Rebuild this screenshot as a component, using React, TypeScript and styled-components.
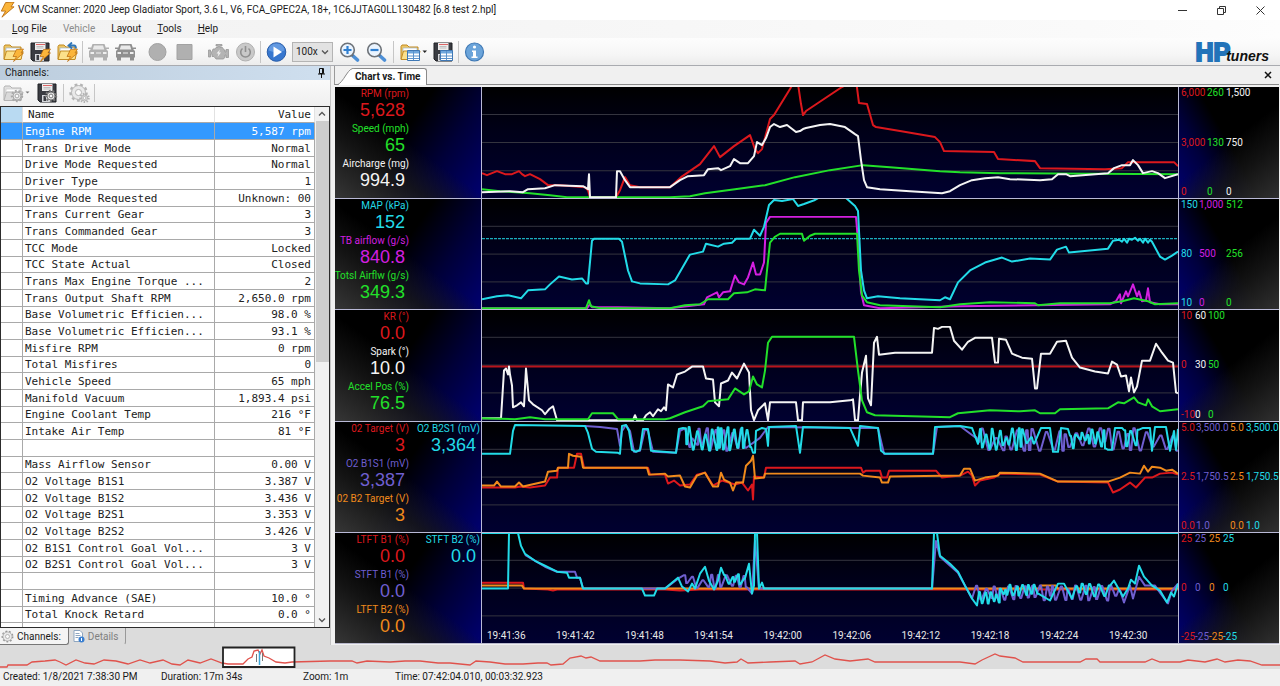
import React from "react";
import styled, { createGlobalStyle } from "styled-components";

const UI = `Roboto, "Open Sans", sans-serif`;
const MONO = `"DejaVu Sans Mono", "Liberation Mono", monospace`;
const GAUGE = `"Liberation Sans", Arial, sans-serif`;

const RED = "#dc181d";
const GREEN = "#22e02a";
const WHITE = "#f4f4f4";
const CYAN = "#22dbe8";
const MAGENTA = "#d31fe0";
const VIOLET = "#6f5fd0";
const ORANGE = "#f08a1c";

const GlobalStyle = createGlobalStyle`
  * { box-sizing: border-box; }
  body { margin: 0; background: #f0f0f0; color: #1a1a1a; font: 10px/16px ${UI}; }
  button { font: inherit; color: inherit; border: 0; background: none; padding: 0; }
`;

const Window = styled.div`
  display: flex;
  flex-direction: column;
  min-height: 100vh;
`;

/* ---------- title bar, menu and toolbar ---------- */

const TitleBar = styled.header`
  display: flex;
  align-items: center;
  height: 20px;
  background: #fff;
`;

const Title = styled.h1`
  flex: 1;
  margin: 0 0 0 2px;
  font: 400 10px/18px ${UI};
  white-space: nowrap;
`;

const CaptionButton = styled.button`
  width: 39px;
  height: 18px;
  display: grid;
  place-items: center;
`;

const MenuBar = styled.nav`
  display: flex;
  height: 18px;
  padding-left: 4px;
  background: linear-gradient(90deg, #f2f2f2, #fafafa 85%, #fdfdfd);
`;

const MenuItem = styled.button`
  padding: 0 8px;
  line-height: 18px;
  &:disabled { color: #8c8c8c; }
`;

const ToolBar = styled.div`
  display: flex;
  align-items: center;
  height: 28px;
  background: linear-gradient(#fdfdfd, #f6f6f6 60%, #ececec);
  border-bottom: 1px solid #a9abb0;
`;

const ToolButton = styled.button<{ $w?: number }>`
  width: ${(p) => p.$w ?? 27}px;
  height: 26px;
  display: flex;
  align-items: center;
  justify-content: center;
`;

const Separator = styled.span<{ $h?: number }>`
  width: 1px;
  height: ${(p) => p.$h ?? 22}px;
  margin: 0 2px 0 1px;
  background: #c6c6c6;
`;

const Gap = styled.span<{ $w: number }>`
  width: ${(p) => p.$w}px;
`;

const SpeedBox = styled.label`
  display: grid;
  align-items: center;
  margin: 0 3px 0 2px;
  > * { grid-area: 1 / 1; }
  > svg { justify-self: end; margin-right: 4px; pointer-events: none; }
`;

const SpeedSelect = styled.select`
  appearance: none;
  width: 41px;
  height: 20px;
  padding: 0 0 0 3px;
  border: 1px solid #b4b4b4;
  border-radius: 0;
  background: #e2e2e2;
  color: #222;
  font: 10px/18px ${UI};
`;

const Logo = styled.div`
  display: flex;
  align-items: flex-end;
  margin-left: auto;
  padding-right: 11px;
  font-family: "Liberation Sans", sans-serif;
  font-weight: 700;
  white-space: nowrap;
`;

const LogoMain = styled.span`
  color: #2273b9;
  font-size: 25px;
  line-height: 24px;
  -webkit-text-stroke: 2px #2273b9;
`;

const LogoSub = styled.span`
  position: relative;
  margin-left: -4px;
  color: #111;
  font-size: 14px;
  line-height: 15px;
  font-style: italic;
`;

/* ---------- channel panel ---------- */

const Body = styled.main`
  flex: 1;
  display: flex;
  gap: 3px;
  min-height: 0;
`;

const SidePanel = styled.section`
  display: flex;
  flex-direction: column;
  flex: 0 0 331px;
  border-right: 1px solid #c4c4c4;
`;

const PanelHead = styled.div`
  display: flex;
  align-items: center;
  justify-content: space-between;
  height: 14px;
  padding: 0 5px;
  background: linear-gradient(90deg, #bccddd, #cfdfef);
`;

const PanelTitle = styled.h2`
  margin: 0;
  font: 400 10px/14px ${UI};
`;

const PanelTools = styled.div`
  display: flex;
  align-items: center;
  height: 26px;
  background: linear-gradient(#fafafa, #efefef);
`;

const ListFrame = styled.div`
  flex: 1 1 0;
  min-height: 522px;
  display: flex;
  border: 1px solid #2c2c2c;
  background: #fff;
  overflow: hidden;
`;

const TableClip = styled.div`
  flex: 1;
  height: 520px;
  overflow: hidden;
`;

const ChannelTable = styled.table`
  width: 100%;
  table-layout: fixed;
  border-collapse: separate;
  border-spacing: 0;
  font: 11px/15px ${MONO};
  color: #222;
  th, td {
    padding: 0 3px 0 2px;
    border-right: 1px solid #a9a9a9;
    border-bottom: 1px solid #a9a9a9;
    font-weight: 400;
    text-align: left;
    white-space: nowrap;
    overflow: hidden;
  }
  th { height: 16px; border-right-color: #e2e2e2; padding-left: 5px; }
  th:first-child { background: #b9daf2; }
  td { height: 17px; }
  tbody tr:nth-child(3n) td { height: 16px; line-height: 14px; }
`;

const ValueCell = styled.td`
  && { text-align: right; }
`;

const ChannelRow = styled.tr<{ $selected?: boolean }>`
  ${(p) => p.$selected && `td { background: #3399ff; color: #fff; }`}
`;

const ScrollBar = styled.div`
  width: 14px;
  display: flex;
  flex-direction: column;
  background: #f1f1f1;
`;

const ScrollArrow = styled.button`
  height: 14px;
  display: grid;
  place-items: center;
`;

const ScrollTrack = styled.div`
  flex: 1;
`;

const ScrollThumb = styled.div`
  height: 49%;
  margin-left: 1px;
  background: #cdcdcd;
`;

const TabStrip = styled.div`
  display: flex;
  height: 17px;
  background: #dcdcdc;
`;

const SideTab = styled.button<{ $active?: boolean }>`
  display: flex;
  align-items: center;
  gap: 3px;
  padding: 0 7px 0 1px;
  color: ${(p) => (p.$active ? "#1a1a1a" : "#808080")};
  background: ${(p) => (p.$active ? "#f4f4f4" : "transparent")};
  border-right: 1px solid ${(p) => (p.$active ? "#777" : "#999")};
  border-bottom: 1px solid ${(p) => (p.$active ? "#777" : "transparent")};
  border-radius: 0 0 3px 0;
  line-height: 15px;
  &:not(:first-child) { padding-left: 4px; }
`;

/* ---------- chart panel ---------- */

const ChartPanel = styled.section`
  flex: 1;
  min-width: 0;
  display: flex;
  flex-direction: column;
  padding-right: 1px;
  background: #f0f0f0;
`;

const ChartTabs = styled.div`
  display: flex;
  align-items: flex-end;
  height: 19px;
  padding-left: 3px;
  border-bottom: 1px solid #8a8a8a;
  border-left: 1px solid #9a9a9a;
`;

const ChartTab = styled.button`
  display: flex;
  height: 17px;
  margin-bottom: -1px;
  font-weight: 700;
`;

const ChartTabText = styled.span`
  padding-right: 5px;
  background: #fff;
  border-top: 1px solid #8a8a8a;
  border-right: 1px solid #8a8a8a;
  border-radius: 0 3px 0 0;
  line-height: 15px;
`;

const CloseButton = styled.button`
  margin: 0 4px 0 auto;
  width: 14px;
  height: 18px;
  display: grid;
  place-items: center;
`;

const Strips = styled.div`
  flex: 1;
  display: grid;
  grid-template-rows: repeat(5, 1fr);
  min-height: 556px;
  margin: 2px 0 1px 1px;
  border-bottom: 1px solid #b9b9cc;
  background: #000;
`;

const Strip = styled.div`
  display: grid;
  grid-template-columns: 147px 1fr 101px;
  min-height: 0;
  overflow: hidden;
  font-family: ${GAUGE};
  & + & { border-top: 1px solid #b9b9d6; }
`;

const Gauges = styled.div`
  display: grid;
  grid-template-columns: 74px 71px;
  grid-template-rows: repeat(3, 35px);
  grid-auto-flow: column;
  background:
    linear-gradient(35deg, #363636, rgba(24, 24, 24, .8) 30%, rgba(0, 0, 0, 0) 50%),
    linear-gradient(305deg, #000070, #000038 30%, rgba(0, 0, 12, 0) 55%),
    #000;
  border-right: 1px solid #b9b9d6;
`;

const Gauge = styled.div<{ $color: string }>`
  display: flex;
  flex-direction: column;
  align-items: flex-end;
  color: ${(p) => p.$color};
  white-space: nowrap;
`;

const GaugeName = styled.span`
  font-family: ${UI};
  font-size: 10px;
  line-height: 13px;
`;

const GaugeValue = styled.span`
  padding-right: 4px;
  font-size: 18px;
  line-height: 21px;
`;

const Plot = styled.div`
  position: relative;
  min-width: 0;
  background: linear-gradient(#000, #000018 40%, #000030);
  > svg { display: block; width: 100%; height: 100%; position: absolute; inset: 0; }
`;

const TimeAxis = styled.div`
  position: absolute;
  inset: auto 0 0 5px;
  display: grid;
  grid-template-columns: repeat(10, 1fr);
  color: #e8e8e8;
  font: 10px/14px ${UI};
`;

const Scales = styled.div`
  display: flex;
  padding-left: 2px;
  border-left: 1px solid #b9b9d6;
  background:
    linear-gradient(322deg, #303030, rgba(24, 24, 24, .8) 28%, rgba(0, 0, 0, 0) 50%),
    linear-gradient(60deg, #000070, #00003c 28%, rgba(0, 0, 12, 0) 50%),
    #000;
`;

const Scale = styled.div<{ $w: number; $color: string }>`
  display: flex;
  flex-direction: column;
  justify-content: space-between;
  width: ${(p) => p.$w}px;
  color: ${(p) => p.$color};
  font: 10px/12px ${UI};
  white-space: nowrap;
`;

/* ---------- overview and status ---------- */

const Overview = styled.div`
  height: 24px;
  background: #dcdcdc;
  > svg { display: block; width: 100%; height: 24px; }
`;

const StatusBar = styled.footer`
  display: grid;
  grid-template-columns: 158px 142px 92px 1fr;
  height: 17px;
  padding-left: 3px;
  line-height: 16px;
`;

/* ---------- icons ---------- */

const Bolt = ({ x = 0, y = 0, s = 1 }: { x?: number; y?: number; s?: number }) => (
  <path
    transform={`translate(${x} ${y}) scale(${s})`}
    d="M4.500 0.500 11.500 0 9 4h2.500L1.500 12.500 4.500 7.500H1z"
    fill="#fbb53a"
    stroke="#b8690c"
    strokeWidth=".7"
    strokeLinejoin="round"
  />
);

const Folder = ({ grey = false }: { grey?: boolean }) => (
  <g stroke={grey ? "#b3b3b3" : "#c28b23"} strokeWidth="1" strokeLinejoin="round">
    <path d="M1 17V4.500L2 3h5l2 2h9v12z" fill={grey ? "#e0e0e0" : "#ecc565"} />
    <path d="M3 6h14v4H3z" fill="#fff" stroke={grey ? "#c8c8c8" : "#9fb8d4"} strokeWidth=".7" />
    <path d="M1 17.500 3.500 9H20l-2 8.500z" fill={grey ? "#dadada" : "#fbe08b"} />
  </g>
);

const Disk = () => (
  <g>
    <path d="M1 1h18v18H3l-2-2z" fill="#3a3c42" stroke="#1f2024" />
    <path d="M5 1h10.500v7H5z" fill="#eee" />
    <path d="M6 2h9v1H6z" fill="#d66" />
    <path d="M6.500 4.500h7M6.500 6h7" stroke="#aaa" strokeWidth=".7" />
    <path d="M5 12h9v7H5z" fill="#d6d8dc" />
    <path d="M6.500 13h2.500v5H6.500z" fill="#3a3c42" />
  </g>
);

const Gear = ({ cx, cy, r, color }: { cx: number; cy: number; r: number; color: string }) => (
  <g>
    <circle cx={cx} cy={cy} r={r} fill="none" stroke={color} strokeWidth="2.400" strokeDasharray={`${(r * Math.PI) / 9} ${(r * Math.PI) / 9}`} />
    <circle cx={cx} cy={cy} r={r - 1} fill="#e9e9e9" stroke={color} strokeWidth="1" />
    <circle cx={cx} cy={cy} r={r / 2.600} fill="#fafafa" stroke={color} strokeWidth="1" />
  </g>
);

const Sheet = ({ x, y }: { x: number; y: number }) => (
  <g transform={`translate(${x} ${y})`}>
    <path d="M.5.5h12v10H.5z" fill="#fff" stroke="#3f78b5" />
    <path d="M1 1h11v2.500H1z" fill="#6ea6dc" />
    <path d="M1 6h11M1 8.500h11M6.500 1v9" stroke="#5b92cb" strokeWidth="1" />
  </g>
);

const Icon = ({ children, w = 21, h = 20, box }: { children: React.ReactNode; w?: number; h?: number; box?: string }) => (
  <svg width={w} height={h} viewBox={box ?? `0 0 ${w} ${h}`} aria-hidden="true">
    {children}
  </svg>
);

const Car = ({ dark = false }: { dark?: boolean }) => {
  const c = dark ? "#8f8f8f" : "#b0b0b0";
  return (
    <Icon>
      <path d="M4.500 2h12L18.500 7.500 20 9v6.500H1V9l1.500-1.500z" fill={c} />
      <path d="M6 3.500h9l1.300 4H4.700z" fill="#e9e9e9" />
      <path d="M0 5.500h3v1.500H0zM18 5.500h3v1.500h-3z" fill={c} />
      <path d="M2 15h4v3.500H2zM15 15h4v3.500h-4z" fill={c} />
      <path d="M2.500 10H6v2H2.500zM15 10h3.500v2H15zM8 10.500h5v1H8z" fill="#efefef" />
    </Icon>
  );
};

const Magnifier = ({ plus = false }: { plus?: boolean }) => (
  <Icon>
    <path d="M13 13l5.500 5" stroke="#4d8fd6" strokeWidth="3.600" strokeLinecap="round" />
    <path d="M12 12l2 2" stroke="#666" strokeWidth="2" />
    <circle cx="8.500" cy="8" r="6.800" fill="#eaf4ff" stroke="#6d7278" strokeWidth="1.600" />
    <path d={plus ? "M4.500 8h8M8.500 4v8" : "M4.500 8h8"} stroke="#2f7fd0" strokeWidth="2.200" />
  </Icon>
);

const Chevron = ({ up = false }: { up?: boolean }) => (
  <svg width="8" height="6" viewBox="0 0 8 6" aria-hidden="true">
    <path d={up ? "M1 4.500 4 1.500 7 4.500" : "M1 1.500 4 4.500 7 1.500"} fill="none" stroke="#555" strokeWidth="1.300" />
  </svg>
);

/* ---------- data ---------- */

const channels: [string, string][] = [
  ["Engine RPM", "5,587 rpm"],
  ["Trans Drive Mode", "Normal"],
  ["Drive Mode Requested", "Normal"],
  ["Driver Type", "1"],
  ["Drive Mode Requested", "Unknown: 00"],
  ["Trans Current Gear", "3"],
  ["Trans Commanded Gear", "3"],
  ["TCC Mode", "Locked"],
  ["TCC State Actual", "Closed"],
  ["Trans Max Engine Torque ...", "2"],
  ["Trans Output Shaft RPM", "2,650.0 rpm"],
  ["Base Volumetric Efficien...", "98.0 %"],
  ["Base Volumetric Efficien...", "93.1 %"],
  ["Misfire RPM", "0 rpm"],
  ["Total Misfires", "0"],
  ["Vehicle Speed", "65 mph"],
  ["Manifold Vacuum", "1,893.4 psi"],
  ["Engine Coolant Temp", "216 °F"],
  ["Intake Air Temp", "81 °F"],
  ["", ""],
  ["Mass Airflow Sensor", "0.00 V"],
  ["O2 Voltage B1S1", "3.387 V"],
  ["O2 Voltage B1S2", "3.436 V"],
  ["O2 Voltage B2S1", "3.353 V"],
  ["O2 Voltage B2S2", "3.426 V"],
  ["O2 B1S1 Control Goal Vol...", "3 V"],
  ["O2 B2S1 Control Goal Vol...", "3 V"],
  ["", ""],
  ["Timing Advance (SAE)", "10.0 °"],
  ["Total Knock Retard", "0.0 °"],
  ["", ""],
];

type Reading = { name: string; value: string; color: string };
type Axis = { w: number; color: string; ticks: [string, string, string] };
type Trace = { color: string; points: string; width?: number; dash?: string };
type StripData = { top: number; readings: Reading[]; axes: Axis[]; traces: Trace[] };

/* Fast switching sensor signal between two levels, reproducible from its seed. */
const swing = (from: number, to: number, high: number, low: number, step: number, seed: number) => {
  let s = seed * 7919;
  const rnd = () => ((s = (s * 16807) % 2147483647) / 2147483647);
  const out: string[] = [];
  let up = true;
  for (let x = from; x < to; x += step * (0.4 + rnd() * 1.2)) {
    const depth = (low - high) * 0.6 * rnd() * rnd();
    const y = up ? high + depth : low - depth;
    out.push(`${x.toFixed(1)},${y.toFixed(1)}`, `${(x + step * 0.3).toFixed(1)},${y.toFixed(1)}`);
    up = !up;
  }
  return out.join(" ");
};

const strips: StripData[] = [
  {
    top: 87,
    readings: [
      { name: "RPM (rpm)", value: "5,628", color: RED },
      { name: "Speed (mph)", value: "65", color: GREEN },
      { name: "Aircharge (mg)", value: "994.9", color: WHITE },
    ],
    axes: [
      { w: 26, color: RED, ticks: ["6,000", "3,000", "0"] },
      { w: 19, color: GREEN, ticks: ["260", "130", "0"] },
      { w: 40, color: WHITE, ticks: ["1,500", "750", "0"] },
    ],
    traces: [
      { color: RED, points: "482,173 487,175 497,171 505,174 512,174 519,171 522,174 525,176 530,174 540,179 548,185 560,185 585,187 588,190 590,197 616,197 620,190 625,177 630,185 640,187 670,187 681,177 700,164 714,146 720,157 734,146 750,135 755,149 758,153 762,149 766,134 770,119 774,115 790,89 795,80 798,84 801,104 803,115 806,111 842,87 856,80 859,103 867,104 873,125 876,127 900,131 935,137 940,142 944,151 994,152 998,159 1035,161 1040,168 1105,169 1122,168 1128,162 1174,162 1178,166" },
      { color: GREEN, points: "482,189 500,191 530,193 550,195 567,197 670,197 690,196 705,193 735,189 765,185 795,177 830,170 863,165 890,167 940,171 960,172 1000,173 1178,174" },
      { color: WHITE, points: "482,192 510,191 523,192 528,189 545,188 555,185 583,186 588,189 589,174 590,197 616,197 617,171 620,171 625,180 630,187 670,187 680,180 688,176 704,175 708,169 718,168 721,170 730,166 734,159 740,163 748,163 754,156 757,142 762,145 766,138 770,127 774,124 780,127 787,125 796,132 800,131 803,129 806,128 820,125 830,124 845,127 855,134 858,136 861,160 864,180 867,187 880,189 910,191 942,193 950,191 960,185 972,180 985,178 998,177 1010,179 1040,180 1052,179 1058,174 1066,174 1070,176 1108,173 1114,168 1122,165 1130,165 1133,160 1138,165 1143,173 1152,171 1158,173 1165,178 1178,174" },
    ],
  },
  {
    top: 198,
    readings: [
      { name: "MAP (kPa)", value: "152", color: CYAN },
      { name: "TB airflow (g/s)", value: "840.8", color: MAGENTA },
      { name: "Totsl Airflw (g/s)", value: "349.3", color: GREEN },
    ],
    axes: [
      { w: 18, color: CYAN, ticks: ["150", "80", "10"] },
      { w: 27, color: MAGENTA, ticks: ["1,000", "500", "0"] },
      { w: 40, color: GREEN, ticks: ["512", "256", "0"] },
    ],
    traces: [
      { color: CYAN, points: "482,238 1178,238", width: 1, dash: "3 1" },
      { color: MAGENTA, points: "482,308 587,308 590,304 592,307 618,307 670,308 704,304 707,297 717,292 719,297 723,292 730,291 735,275 739,282 744,284 748,277 753,262 756,274 760,274 764,262 766,222 770,216 856,216 858,240 861,292 864,305 880,308 960,306 1110,304 1116,301 1120,294 1121,303 1126,291 1128,296 1133,284 1137,296 1139,291 1142,301 1146,300 1148,288 1150,302 1160,304 1178,304" },
      { color: CYAN, points: "482,299 497,296 508,295 521,298 528,290 545,289 550,284 559,276 572,279 582,278 586,283 588,283 592,240 594,238 619,238 622,241 628,270 632,281 640,283 668,284 675,280 690,254 703,251 706,243 718,246 724,243 732,242 736,238 750,238 754,229 760,235 764,226 769,204 774,199 782,200 793,198 798,205 804,203 815,199 820,196 846,197 855,205 858,210 861,270 864,290 867,298 878,296 900,298 940,300 945,297 950,299 958,282 970,270 985,262 1002,257 1012,261 1030,258 1050,259 1057,249 1066,246 1069,252 1108,248 1113,240 1119,239 1122,241 1124,238 1127,242 1129,238 1132,239 1135,237 1138,240 1140,238 1143,242 1145,238 1148,242 1150,239 1152,241 1160,256 1165,259 1172,255 1178,251" },
      { color: GREEN, points: "482,308 586,308 589,300 591,306 600,308 670,308 685,305 700,304 708,299 720,299 728,299 734,293 747,292 755,289 765,290 767,270 770,242 775,236 780,233 802,233 804,240 810,235 815,233 857,233 859,270 862,295 867,302 880,305 940,307 960,304 990,302 1035,303 1038,305 1060,303 1110,303 1122,301 1134,298 1148,301 1155,304 1178,303" },
    ],
  },
  {
    top: 309,
    readings: [
      { name: "KR (°)", value: "0.0", color: RED },
      { name: "Spark (°)", value: "10.0", color: WHITE },
      { name: "Accel Pos (%)", value: "76.5", color: GREEN },
    ],
    axes: [
      { w: 14, color: RED, ticks: ["10", "0", "-10"] },
      { w: 13, color: WHITE, ticks: ["60", "30", "0"] },
      { w: 40, color: GREEN, ticks: ["100", "50", "0"] },
    ],
    traces: [
      { color: "#b8141c", points: "482,366 1178,366" },
      { color: WHITE, points: "482,418 501,418 504,370 506,368 508,374 509,366 510,374 512,385 513,407 517,405 521,402 524,406 526,368 529,400 533,404 542,410 545,414 549,409 553,406 557,420 633,420 635,415 637,420 643,420 646,415 650,412 653,416 658,409 661,411 664,407 666,410 668,384 673,387 677,374 685,371 692,366 703,366 706,378 713,379 715,402 719,406 721,383 728,380 732,372 737,378 744,363 749,372 751,410 754,420 758,410 765,403 768,420 770,402 796,402 798,420 802,420 803,402 830,402 850,400 853,399 855,420 858,420 860,395 862,372 866,355 868,398 871,405 874,342 877,336 879,354 895,352 932,352 934,327 938,328 942,326 950,326 954,340 962,349 968,341 975,337 992,337 995,362 998,362 999,338 1006,339 1012,353 1022,357 1032,358 1035,388 1037,388 1041,353 1050,353 1057,341 1066,340 1072,357 1080,367 1095,371 1108,373 1112,361 1117,364 1121,376 1126,375 1129,391 1131,377 1134,392 1137,386 1142,360 1150,360 1156,343 1162,352 1168,360 1173,362 1176,392 1178,393" },
      { color: GREEN, points: "482,418 515,419 530,417 545,419 588,419 592,413 613,413 618,419 665,419 670,418 685,412 703,406 708,401 728,399 735,388 744,394 749,391 753,376 757,384 762,387 765,370 768,342 772,336 854,336 858,370 862,400 867,412 875,415 950,417 958,413 990,410 1020,411 1035,410 1040,413 1055,413 1060,409 1108,408 1118,402 1124,403 1134,397 1138,402 1146,405 1148,399 1152,406 1160,411 1178,409" },
    ],
  },
  {
    top: 421,
    readings: [
      { name: "02 Target (V)", value: "3", color: RED },
      { name: "O2 B1S1 (mV)", value: "3,387", color: VIOLET },
      { name: "02 B2 Target (V)", value: "3", color: ORANGE },
      { name: "O2 B2S1 (mV)", value: "3,364", color: CYAN },
    ],
    axes: [
      { w: 15, color: RED, ticks: ["5.0", "2.5", "0.0"] },
      { w: 34, color: VIOLET, ticks: ["3,500.0", "1,750.5", "1.0"] },
      { w: 16, color: ORANGE, ticks: ["5.0", "2.5", "0.0"] },
      { w: 30, color: CYAN, ticks: ["3,500.0", "1,750.5", "1.0"] },
    ],
    traces: [
      { color: RED, points: "482,487 515,487 520,486 530,487 545,485 550,477 557,477 558,467 574,467 577,453 581,453 584,467 648,467 650,474 665,474 668,483 674,480 680,485 690,484 697,474 705,472 713,485 722,480 735,484 742,482 748,490 752,484 753,499 754,476 764,477 766,467 861,467 863,472 866,470 880,470 882,477 887,477 889,470 936,470 942,477 960,475 968,471 972,475 975,485 980,480 994,477 1000,473 1040,474 1058,481 1108,482 1113,492 1120,489 1130,482 1136,487 1145,477 1152,477 1160,473 1172,472 1178,474" },
      { color: ORANGE, points: "482,485 494,485 497,481 501,486 515,486 519,482 523,486 545,481 548,471 557,470 558,467 568,467 569,453 573,455 581,456 583,467 647,467 649,474 665,473 668,476 680,475 685,486 690,487 697,475 705,472 713,486 718,486 721,472 724,479 730,482 733,490 736,482 743,482 746,465 751,460 753,455 755,478 764,477 765,473 860,473 863,475 880,477 882,482 888,482 890,476 960,475 964,468 970,468 975,480 985,477 998,475 1000,472 1040,473 1058,481 1108,481 1120,477 1130,472 1140,473 1144,465 1148,471 1152,466 1160,467 1166,470 1172,469 1178,473" },
      { color: VIOLET, points: `585,425 600,426 617,428 620,445 622,430 626,424 630,430 634,451 640,450 645,428 648,430 653,451 676,452 680,430 ${swing(684, 750, 427, 450, 4, 31)} 760,437 768,426 856,427 878,427 884,453 933,453 937,426 960,425 ${swing(975, 1178, 427, 450, 5, 77)}` },
      { color: CYAN, points: `482,453 510,453 513,430 515,424 585,425 588,432 592,448 596,451 618,452 620,453 622,425 626,424 629,430 632,449 636,451 640,449 643,428 648,428 651,450 676,452 679,428 683,427 ${swing(685, 752, 426, 450, 3, 11)} 753,452 755,452 756,430 762,427 766,428 768,445 769,426 796,425 800,452 803,426 850,427 858,445 860,425 878,427 881,450 885,453 933,453 935,426 960,425 972,427 978,443 ${swing(980, 1038, 427, 450, 3, 5)} 1041,427 1050,427 1053,451 1058,451 1061,427 1068,428 ${swing(1070, 1106, 428, 448, 3, 43)} 1108,449 1112,449 1115,427 1122,427 ${swing(1124, 1140, 428, 450, 4, 8)} 1143,427 1150,427 1152,450 1155,426 1166,426 1170,450 1174,430 1176,449 1178,428` },
    ],
  },
  {
    top: 532,
    readings: [
      { name: "LTFT B1 (%)", value: "0.0", color: RED },
      { name: "STFT B1 (%)", value: "0.0", color: VIOLET },
      { name: "LTFT B2 (%)", value: "0.0", color: ORANGE },
      { name: "STFT B2 (%)", value: "0.0", color: CYAN },
    ],
    axes: [
      { w: 14, color: RED, ticks: ["25", "0", "-25"] },
      { w: 14, color: VIOLET, ticks: ["25", "0", "-25"] },
      { w: 14, color: ORANGE, ticks: ["25", "0", "-25"] },
      { w: 30, color: CYAN, ticks: ["25", "0", "-25"] },
    ],
    traces: [
      { color: RED, points: "482,582 523,582 524,588 548,589 553,590 557,589 665,589 680,590 700,589 1178,589" },
      { color: ORANGE, points: "482,585 522,585 524,588 1040,588 1041,585 1056,585 1058,588 1178,588" },
      { color: VIOLET, points: `525,554 545,566 557,571 575,571 577,577 580,577 583,588 665,588 678,578 ${swing(684, 748, 574, 588, 4, 19)} 752,593 755,540 759,588 932,588 936,540 940,556 958,572 972,598 ${swing(976, 1120, 585, 600, 4, 51)} 1124,602 1130,585 1133,598 1139,576 1145,585 1155,585 1160,592 1168,603 1172,590 1178,583` },
      { color: CYAN, points: `482,588 508,588 509,532 518,532 521,545 525,553 535,560 545,565 557,571 567,572 569,577 580,577 583,588 642,588 645,595 654,595 657,588 665,588 678,577 682,586 688,591 692,583 695,588 700,573 705,566 709,580 714,589 718,580 721,567 ${swing(724, 744, 573, 584, 3, 3)} 749,563 752,593 754,585 755,532 757,532 759,588 762,582 764,588 932,588 934,532 937,532 940,555 950,563 958,571 965,585 972,598 977,605 ${swing(979, 1000, 590, 603, 3, 21)} ${swing(1000, 1040, 584, 595, 3, 29)} 1050,600 1058,583 1064,583 1072,598 ${swing(1076, 1112, 583, 596, 4, 13)} 1114,580 1123,596 1128,588 1131,579 1135,583 1139,565 1144,576 1152,585 1160,590 1167,602 1171,592 1174,596 1178,583` },
      { color: CYAN, points: "482,532 1178,532" },
    ],
  },
];

const times = ["19:41:36", "19:41:42", "19:41:48", "19:41:54", "19:42:00", "19:42:06", "19:42:12", "19:42:18", "19:42:24", "19:42:30"];

const overviewTrace =
  "0,667 7,667 8,665 27,665 32,662 45,661 55,660 60,662 66,665 76,660 85,663 94,664 104,660 116,661 128,664 140,660 150,663 163,660 172,664 180,665 188,660 200,663 211,659 222,663 228,664 243,664 248,659 252,657 254,651 258,650 260,654 262,650 264,656 269,658 276,662 285,663 292,662 330,661 352,661 357,663 367,661 390,662 405,661 420,661 438,663 450,663 470,665 476,661 490,662 505,664 523,664 538,663 547,663 551,665 563,664 570,658 581,656 586,658 591,657 600,661 640,661 655,660 680,660 710,661 725,663 737,662 741,659 748,663 770,662 795,661 800,664 812,662 825,655 835,659 850,661 868,659 875,662 960,662 975,664 982,660 995,654 1000,656 1015,658 1023,662 1080,662 1086,659 1097,659 1100,662 1145,662 1152,659 1160,662 1180,662 1188,660 1205,662 1217,659 1225,662 1238,660 1250,661 1262,665 1280,665";

/* ---------- sections ---------- */

const StripView = ({ data, last }: { data: StripData; last: boolean }) => (
  <Strip>
    <Gauges>
      {data.readings.map((r) => (
        <Gauge key={r.name} $color={r.color}>
          <GaugeName>{r.name}</GaugeName>
          <GaugeValue>{r.value}</GaugeValue>
        </Gauge>
      ))}
    </Gauges>
    <Plot>
      <svg viewBox={`482 ${data.top} 696 111`} preserveAspectRatio="none" aria-hidden="true">
        {[27, 55, 83].map((y) => (
          <path key={y} d={`M482 ${data.top + y + 0.5}H1178`} stroke="#34343f" />
        ))}
        {data.traces.map((t, i) => (
          <polyline key={i} points={t.points} fill="none" stroke={t.color} strokeWidth={t.width ?? 2} strokeDasharray={t.dash} strokeLinejoin="round" />
        ))}
      </svg>
      {last && (
        <TimeAxis>
          {times.map((t) => (
            <span key={t}>{t}</span>
          ))}
        </TimeAxis>
      )}
    </Plot>
    <Scales>
      {data.axes.map((a, i) => (
        <Scale key={i} $w={a.w} $color={a.color}>
          {a.ticks.map((t, j) => (
            <span key={j}>{t}</span>
          ))}
        </Scale>
      ))}
    </Scales>
  </Strip>
);

const MainToolBar = () => (
  <ToolBar role="toolbar" aria-label="Main">
    <ToolButton aria-label="Open log"><Icon><Folder /><Bolt x={9} y={7} /></Icon></ToolButton>
    <ToolButton aria-label="Save log"><Icon><Disk /><Bolt x={9} y={7} /></Icon></ToolButton>
    <ToolButton aria-label="Reopen log">
      <Icon><Folder /><path d="M12 3.500h5q2 0 2 3M15 .5l-3.500 3L15 6.500" fill="none" stroke="#2e75b8" strokeWidth="1.800" /><Bolt x={9} y={7} /></Icon>
    </ToolButton>
    <Separator />
    <ToolButton aria-label="Connect" disabled><Car /></ToolButton>
    <ToolButton aria-label="Disconnect" disabled><Car dark /></ToolButton>
    <Gap $w={5} />
    <ToolButton aria-label="Record" disabled>
      <Icon><circle cx="10.500" cy="10" r="8.500" fill="#b0b0b0" stroke="#a2a2a2" /></Icon>
    </ToolButton>
    <ToolButton aria-label="Stop" disabled>
      <Icon><path d="M3 2.500h15v15H3z" fill="#b0b0b0" stroke="#a2a2a2" /></Icon>
    </ToolButton>
    <Gap $w={7} />
    <ToolButton aria-label="Engine controls" disabled>
      <Icon>
        <path d="M5 7h2l1-1.500h2V4H8V2.500h6V4h-2v1.500h2.500L16 8h1v2h1V7.500h2.500v8H18V13h-1v2l-1.500 2H8l-2-2.500H4V12H2.500v3H.5V8h2v2H4z" fill="#b4b4b4" stroke="#989898" strokeWidth=".8" />
        <path d="M12 7.500 8.500 11.500h2l-1 3.500 3.500-4.500h-2z" fill="#f2f2f2" />
      </Icon>
    </ToolButton>
    <ToolButton aria-label="Power" disabled>
      <Icon>
        <circle cx="10.500" cy="10" r="9" fill="#c9c9c9" stroke="#b0b0b0" />
        <path d="M7.500 6.500a4.800 4.800 0 1 0 6 0M10.500 4v6" fill="none" stroke="#8f8f8f" strokeWidth="1.600" />
      </Icon>
    </ToolButton>
    <Separator />
    <ToolButton aria-label="Play">
      <Icon>
        <circle cx="10.500" cy="10" r="9.300" fill="#3777cf" stroke="#2a5da8" />
        <path d="M2.500 8.500a8 7 0 0 1 16 0q-8 3-16 0z" fill="#75a8e8" opacity=".7" />
        <path d="M7.500 4.500v11l8.500-5.500z" fill="#fff" />
      </Icon>
    </ToolButton>
    <SpeedBox>
      <SpeedSelect aria-label="Playback speed" defaultValue="100x"><option>100x</option></SpeedSelect>
      <Chevron />
    </SpeedBox>
    <ToolButton aria-label="Zoom in"><Magnifier plus /></ToolButton>
    <ToolButton aria-label="Zoom out"><Magnifier /></ToolButton>
    <Gap $w={2} />
    <Separator />
    <ToolButton aria-label="Open layout" $w={34}>
      <Icon w={27}><Folder /><Sheet x={7} y={8} /><path d="M22.500 8.500h4.500l-2.250 2.500z" fill="#222" /></Icon>
    </ToolButton>
    <ToolButton aria-label="Save layout"><Icon><Disk /><Sheet x={7} y={8} /></Icon></ToolButton>
    <Separator />
    <ToolButton aria-label="About">
      <Icon>
        <circle cx="10.500" cy="10" r="9" fill="#6ba4da" stroke="#3f79b5" strokeWidth="1.200" />
        <circle cx="10.500" cy="5" r="1.600" fill="#fff" />
        <path d="M8 8.500h4v6h1.500V16h-6v-1.500H9V10H8z" fill="#fff" />
      </Icon>
    </ToolButton>
    <Logo><LogoMain>HP</LogoMain><LogoSub>tuners</LogoSub></Logo>
  </ToolBar>
);

export default function App() {
  return (
    <Window>
      <GlobalStyle />
      <TitleBar>
        <Icon w={16} h={17} box="0 0 13 14"><Bolt /></Icon>
        <Title>VCM Scanner: 2020 Jeep Gladiator Sport, 3.6 L, V6, FCA_GPEC2A, 18+, 1C6JJTAG0LL130482 [6.8 test 2.hpl]</Title>
        <CaptionButton aria-label="Minimize">
          <svg width="9" height="9"><path d="M0 4.500h9" stroke="#333" /></svg>
        </CaptionButton>
        <CaptionButton aria-label="Restore">
          <svg width="9" height="9"><path d="M.5 2.500h6v6h-6zM2.500 2.500v-2h6v6h-2" fill="none" stroke="#333" /></svg>
        </CaptionButton>
        <CaptionButton aria-label="Close">
          <svg width="9" height="9"><path d="M.5.5l8 8M8.500.5l-8 8" stroke="#333" /></svg>
        </CaptionButton>
      </TitleBar>
      <MenuBar aria-label="Menu">
        <MenuItem><u>L</u>og File</MenuItem>
        <MenuItem disabled>Vehicle</MenuItem>
        <MenuItem>Layout</MenuItem>
        <MenuItem><u>T</u>ools</MenuItem>
        <MenuItem><u>H</u>elp</MenuItem>
      </MenuBar>
      <MainToolBar />

      <Body>
        <SidePanel>
          <PanelHead>
            <PanelTitle>Channels:</PanelTitle>
            <svg width="7" height="10" aria-hidden="true"><path d="M1.500.5h4v5h-4zM0 6h7M3.500 6v4M4.500 1v4.500" fill="none" stroke="#111" /></svg>
          </PanelHead>
          <PanelTools>
            <ToolButton aria-label="Open channels" disabled $w={32}>
              <Icon w={27}><Folder grey /><Gear cx={14} cy={13} r={5} color="#a8a8a8" /><path d="M22.500 8.500h4l-2 2z" fill="#777" /></Icon>
            </ToolButton>
            <ToolButton aria-label="Save channels" $w={30}><Icon><Disk /><Gear cx={14} cy={13} r={5} color="#777" /></Icon></ToolButton>
            <Separator $h={18} />
            <ToolButton aria-label="Channel settings" disabled>
              <Icon><Gear cx={9.500} cy={9.500} r={8} color="#b4b4b4" /><Gear cx={15.500} cy={15} r={4} color="#b4b4b4" /></Icon>
            </ToolButton>
            <Separator $h={18} />
          </PanelTools>
          <ListFrame>
            <TableClip>
              <ChannelTable>
                <colgroup>
                  <col style={{ width: 22 }} />
                  <col />
                  <col style={{ width: 100 }} />
                </colgroup>
                <thead>
                  <tr>
                    <th aria-label="Marker" />
                    <th>Name</th>
                    <ValueCell as="th">Value</ValueCell>
                  </tr>
                </thead>
                <tbody>
                  {channels.map(([name, value], i) => (
                    <ChannelRow key={i} $selected={i === 0}>
                      <td />
                      <td>{name}</td>
                      <ValueCell>{value}</ValueCell>
                    </ChannelRow>
                  ))}
                </tbody>
              </ChannelTable>
            </TableClip>
            <ScrollBar>
              <ScrollArrow aria-label="Scroll up"><Chevron up /></ScrollArrow>
              <ScrollTrack><ScrollThumb /></ScrollTrack>
              <ScrollArrow aria-label="Scroll down"><Chevron /></ScrollArrow>
            </ScrollBar>
          </ListFrame>
          <TabStrip>
            <SideTab $active><Icon w={13} h={13} box="0 0 20 20"><Gear cx={10} cy={10} r={8} color="#999" /></Icon>Channels:</SideTab>
            <SideTab>
              <Icon w={12} h={13}>
                <path d="M1 .5h6l2.500 2.500v8.500H1z" fill="#fff" stroke="#8fa6c0" /><path d="M2.500 3.500h4M2.500 5.500h5M2.500 7.500h3" stroke="#8fa6c0" />
                <circle cx="8.500" cy="9.500" r="3" fill="#3a7fd0" /><path d="M8.500 8v3" stroke="#fff" />
              </Icon>
              Details
            </SideTab>
          </TabStrip>
        </SidePanel>

        <ChartPanel>
          <ChartTabs>
            <ChartTab>
              <svg width="17" height="17" aria-hidden="true"><path d="M0 17Q3 15 8 7T17 .5V17z" fill="#fff" /><path d="M0 16.500Q3 15 8 7T17 .5" fill="none" stroke="#8a8a8a" /></svg>
              <ChartTabText>Chart vs. Time</ChartTabText>
            </ChartTab>
            <CloseButton aria-label="Close chart">
              <svg width="8" height="8"><path d="M1 1l6 6M7 1L1 7" stroke="#111" strokeWidth="1.500" /></svg>
            </CloseButton>
          </ChartTabs>
          <Strips>
            {strips.map((s, i) => (
              <StripView key={s.top} data={s} last={i === strips.length - 1} />
            ))}
          </Strips>
        </ChartPanel>
      </Body>

      <Overview>
        <svg viewBox="0 645 1280 24" preserveAspectRatio="none" role="img" aria-label="Log overview">
          <path d="M223 647.500h71.500v19.500H223z" fill="#fff" />
          <polyline points={overviewTrace} fill="none" stroke="#e0524c" strokeWidth="1.300" />
          <path d="M259.500 651v14" stroke="#39a5d8" strokeWidth="1.500" />
          <path d="M256.500 654v8M262.500 653v8" stroke="#777" />
          <path d="M223 647.500h71.500v19.500H223z" fill="none" stroke="#222" strokeWidth="1.800" />
        </svg>
      </Overview>
      <StatusBar>
        <span>Created: 1/8/2021 7:38:30 PM</span>
        <span>Duration: 17m 34s</span>
        <span>Zoom: 1m</span>
        <span>Time: 07:42:04.010, 00:03:32.923</span>
      </StatusBar>
    </Window>
  );
}
